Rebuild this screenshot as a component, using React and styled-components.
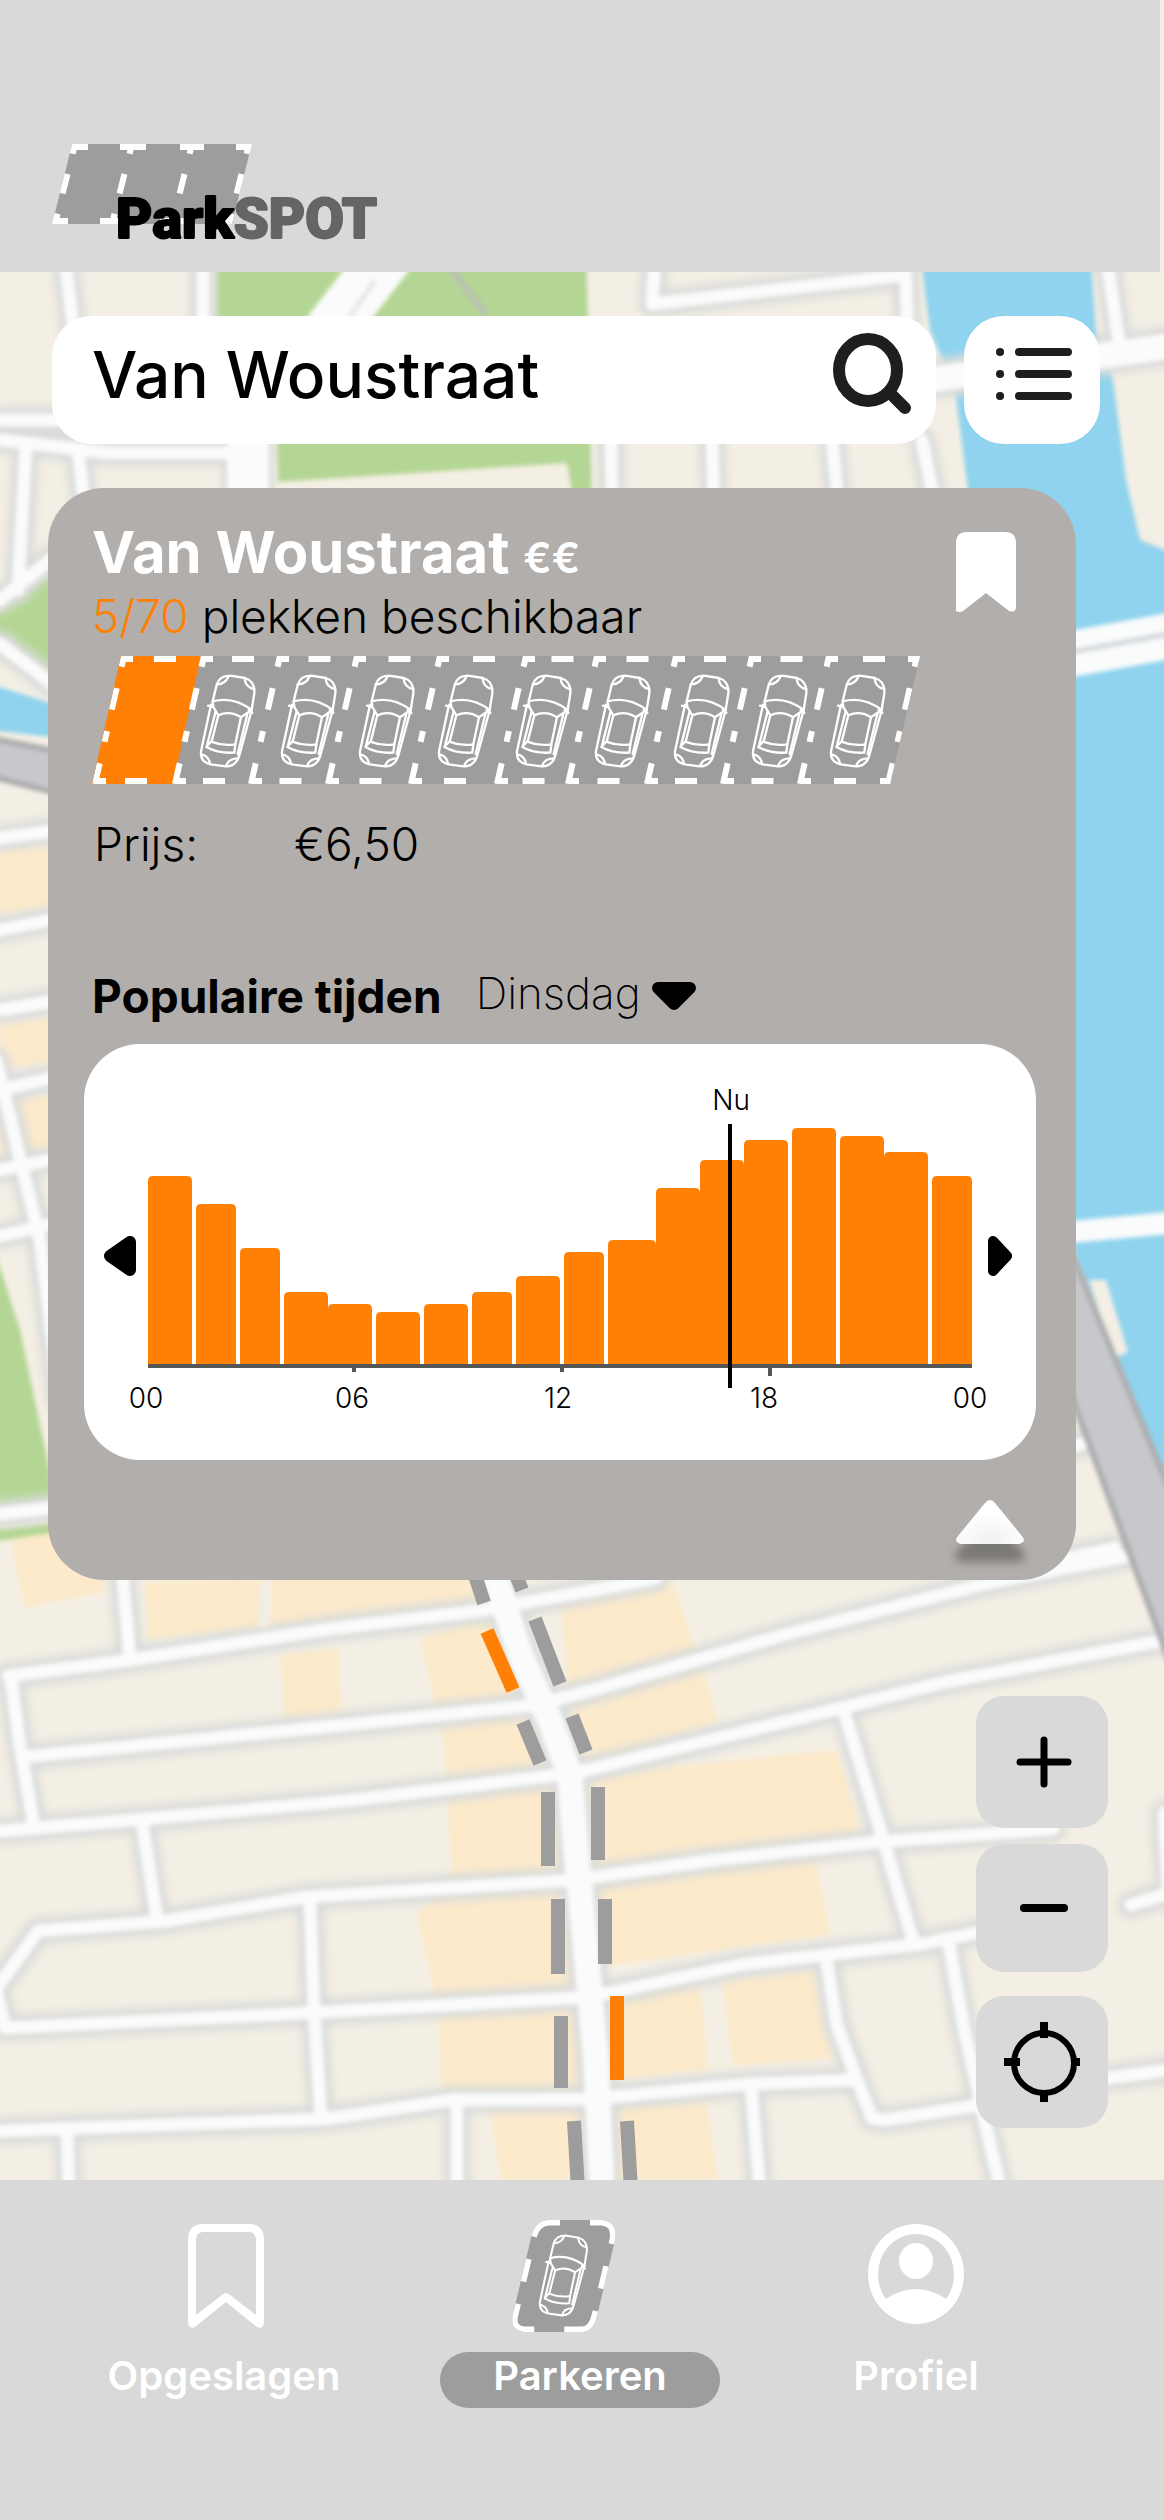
import React from 'react'
import styled, { createGlobalStyle } from 'styled-components'

const ORANGE = '#ff8005';
const GRAY = '#9d9d9d';

const GlobalStyle = createGlobalStyle`
  * {
    box-sizing: border-box;
  }
  body {
    margin: 0;
    background: #d9d9d9;
    font-family: Inter, "Liberation Sans", sans-serif;
    color: #000;
  }
  button {
    border: none;
    padding: 0;
    background: none;
    cursor: pointer;
  }
  svg {
    display: block;
  }
`;

const Page = styled.div`
  position: relative;
  display: flex;
  flex-direction: column;
  min-height: 100vh;
  overflow: hidden;
`;

/* the map lies under everything else */
const MapCanvas = styled.svg`
  position: absolute;
  top: 0;
  left: 0;
  width: 100%;
  height: 100%;
`;

const Header = styled.header`
  position: relative;
  margin-right: 4px;
  padding: 144px 52px 32px;
  background: #d9d9d9;
`;

const Main = styled.main`
  position: relative;
  flex: 1;
  display: flex;
  flex-direction: column;
  padding: 44px 0 52px;
`;

const TopBar = styled.div`
  display: flex;
  gap: 28px;
  padding: 0 64px 0 52px;
`;

const SearchForm = styled.form`
  flex: 1;
  min-width: 0;
  height: 128px;
  display: flex;
  align-items: center;
  padding: 0 24px 0 40px;
  border-radius: 40px;
  background: #fff;
`;

const SearchInput = styled.input`
  flex: 1;
  min-width: 0;
  height: 128px;
  border: none;
  outline: none;
  padding: 0 0 12px;
  background: none;
  font-family: inherit;
  font-size: 64px;
  font-weight: 500;
  color: #000;
`;

const SearchButton = styled.button`
  padding-bottom: 14px;
`;

const ListButton = styled.button`
  width: 136px;
  height: 128px;
  display: flex;
  justify-content: center;
  align-items: center;
  padding-bottom: 12px;
  border-radius: 40px;
  background: #fff;
`;

const Card = styled.section`
  display: flex;
  flex-direction: column;
  margin: 44px 88px 0 48px;
  padding: 32px 40px 36px 36px;
  border-radius: 56px;
  background: #b2aeac;
`;

const CardHead = styled.div`
  display: flex;
  justify-content: space-between;
  align-items: flex-start;
  padding: 0 20px 0 8px;
`;

const Title = styled.h1`
  margin: 0;
  font-size: 58px;
  line-height: 64px;
  font-weight: 700;
  color: #fff;
`;

const PriceLevel = styled.span`
  font-size: 42px;
  line-height: 42px;
  font-weight: 600;
`;

const Line = styled.p`
  margin: 0;
  font-size: 46px;
  line-height: 64px;
  font-weight: 300;
`;

const Free = styled.span`
  color: ${ORANGE};
`;

const SaveButton = styled.button`
  margin-top: 12px;
`;

const Spots = styled.svg`
  width: 828px;
  max-width: 100%;
  margin: 8px 0 0 8px;
`;

const PriceRow = styled.dl`
  display: flex;
  margin: 28px 0 0;
  padding-left: 10px;
  font-size: 46px;
  line-height: 64px;
  font-weight: 300;
`;

const PriceTerm = styled.dt`
  width: 200px;
`;

const PriceValue = styled.dd`
  margin: 0;
`;

const TimesHead = styled.div`
  display: flex;
  align-items: center;
  margin-top: 88px;
  padding-left: 8px;
`;

const TimesTitle = styled.h2`
  margin: 0 34px 0 0;
  font-size: 46px;
  line-height: 64px;
  font-weight: 700;
`;

const DaySelect = styled.select`
  appearance: none;
  width: 176px;
  height: 64px;
  border: none;
  outline: none;
  padding: 0 0 6px;
  background: none;
  font-family: inherit;
  font-size: 44px;
  font-weight: 200;
  color: #000;
`;

const ChartCard = styled.div`
  margin-top: 16px;
  padding: 36px 0 44px;
  border-radius: 56px;
  background: #fff;
`;

const ChartRow = styled.div`
  display: flex;
  align-items: center;
  padding: 0 24px 0 20px;
`;

const ArrowButton = styled.button`
  padding-top: 52px;
`;

const Plot = styled.svg`
  flex: 1;
  min-width: 0;
  margin: 0 16px 0 12px;
  overflow: visible;
`;

const Hours = styled.div`
  display: flex;
  justify-content: space-between;
  padding: 0 46px 0 42px;
`;

const Hour = styled.span`
  width: 40px;
  text-align: center;
  font-size: 28px;
  line-height: 36px;
  font-weight: 300;
`;

const CollapseButton = styled.button`
  align-self: flex-end;
  margin: 40px 12px 0 0;
`;

const Controls = styled.div`
  align-self: flex-end;
  display: flex;
  flex-direction: column;
  margin: 116px 56px 0 0;
`;

const ControlButton = styled.button`
  width: 132px;
  height: ${props => props.$height}px;
  margin-bottom: ${props => props.$gap}px;
  display: flex;
  justify-content: center;
  align-items: center;
  padding-left: 4px;
  border-radius: 28px;
  background: #d9d9d9;
`;

const Nav = styled.nav`
  position: relative;
  display: grid;
  grid-template-columns: 356fr 356fr 316fr;
  padding: 40px 90px 112px 46px;
  background: #d9d9d9;
`;

const NavLink = styled.a`
  display: flex;
  flex-direction: column;
  align-items: center;
  color: #fff;
  text-decoration: none;
`;

const NavIcon = styled.span`
  height: 112px;
  display: flex;
  align-items: center;
`;

const NavLabel = styled.span`
  width: 280px;
  margin-top: 20px;
  padding-bottom: 8px;
  border-radius: 28px;
  background: ${props => props.$active ? GRAY : 'transparent'};
  font-size: 40px;
  line-height: 48px;
  font-weight: 600;
  text-align: center;
`;

const streets = [
  // north
  'M65 260L75 340', 'M203 260V340', 'M655 260L652 304L905 275', 'M905 260L908 340',
  'M0 420H70', 'M0 440L110 453H250', 'M26 445L18 590', 'M78 450L84 500',
  'M611 440L612 500', 'M712 440L714 500', 'M832 440L838 500', 'M922 440L934 500',
  'M1107 260L1120 350', 'M0 600L60 552', 'M0 644L60 690',
  // west
  'M0 838L60 830', 'M0 930L60 918', 'M0 1010L60 1000', 'M0 1090L60 1076', 'M0 1170L60 1158',
  'M0 1236L60 1222', 'M-4 1060L40 1240L60 1400', 'M0 1514L70 1506',
  // east
  'M1060 1450L1110 1436', 'M1060 1560L1115 1548',
  // centre
  'M122 1570L130 1658', 'M11 1678L19 1740L33 1821', 'M142 1821L147 1854L157 1919',
  'M310 1903L314 2009L321 2119', 'M67 2131L69 2190', 'M457 2099V2190',
  'M8 1676L130 1660L329 1629L478 1611L600 1589L656 1578',
  'M23 1757L325 1727L536 1705L600 1688L791 1633L984 1584L1128 1556',
  'M0 1831L145 1819L344 1801L566 1774L579 1772L837 1709L945 1682L1160 1641',
  'M-4 1989L38 1931L165 1921L306 1897L574 1880L714 1860L876 1842L1053 1829',
  'M-4 1989L5 2028L306 2013L589 1997L745 1964L922 1944L1000 1928',
  'M0 2131L325 2119L452 2100L589 2099L749 2084L857 2080',
  'M827 1964L837 2025L857 2080L872 2118L885 2120L980 2105',
  'M845 1715L884 1842L914 1944', 'M949 1944L964 2029L991 2148L1001 2190',
  'M751 2087L760 2190', 'M1164 1813L1168 1885', 'M1131 1905L1170 1893', 'M1100 2079L1170 2070',
];

const mainRoads = [
  'M490 1560L520 1654L551 1723L570 1776L575 1840L583 1920L596 2060L602 2190',
  'M928 380L1170 346',
];

const buildings = [
  '8,1530 110,1530 104,1592 25,1608',
  '145,1582 470,1570 485,1605 148,1640',
  '281,1654 339,1648 341,1713 285,1721',
  '420,1640 490,1612 551,1723 570,1776 590,2180 501,2180 490,2110 442,2088 438,2010 417,1915 452,1870 443,1735',
  '560,1590 672,1580 691,1637 706,1678 718,1723 575,1770',
  '590,1780 656,1768 837,1750 860,1830 816,1862 830,1935 591,1968',
  '610,1990 700,1984 708,2070 610,2080',
  '722,1980 814,1970 833,2058 733,2066',
  '610,2107 706,2101 718,2180 610,2180',
  '0,850 60,844 60,905 0,915',
  '0,1024 60,1015 60,1060 0,1070',
  '0,1104 60,1092 60,1146 0,1158',
];

const parkedBars = [
  [474, 1572, 484, 1603], [487, 1631, 513, 1690, true], [523, 1722, 540, 1763],
  [548, 1792, 548, 1866], [558, 1899, 558, 1974], [561, 2016, 561, 2088], [574, 2121, 578, 2190],
  [514, 1570, 522, 1590], [535, 1619, 560, 1684], [572, 1716, 586, 1752],
  [598, 1787, 598, 1860], [605, 1899, 605, 1964], [617, 1996, 617, 2080, true], [627, 2121, 631, 2190],
];

const CityMap = () => (
  <MapCanvas viewBox="0 0 1164 2520" preserveAspectRatio="xMidYMin slice" aria-hidden="true">
    <defs>
      <filter id="soft" x="-5%" y="-5%" width="110%" height="110%">
        <feGaussianBlur stdDeviation="4" />
      </filter>
      <filter id="edge" x="-5%" y="-5%" width="110%" height="110%">
        <feGaussianBlur stdDeviation="2" />
      </filter>
    </defs>
    <rect width="1164" height="2520" fill="#f4efe4" />
    <g filter="url(#edge)">
      <g fill="#fceacb">
        {buildings.map(points => <polygon key={points} points={points} />)}
      </g>
      <g fill="#b4d694">
        <polygon points="215,240 586,240 592,500 573,500 567,463 278,482 276,440 215,320" />
        <polygon points="-10,616 60,566 60,680 -10,640" />
        <polygon points="-10,1236 20,1330 56,1500 -10,1512" />
        <polygon points="-10,1530 60,1522 60,1532 -10,1542" />
      </g>
      <g fill="#8fd3ee">
        <polygon points="918,240 1090,240 1096,330 1113,380 1126,480 1140,540 1180,556 1180,1520 1076,1260 980,600 968,490 955,390 930,330" />
        <polygon points="-10,684 60,706 60,738 -10,730" />
      </g>
    </g>
    <g fill="none" strokeLinecap="round" strokeLinejoin="round">
      <g filter="url(#soft)" stroke="#dadcda" strokeWidth="27">
        {streets.map(d => <path key={d} d={d} />)}
        {mainRoads.map(d => <path key={d} d={d} strokeWidth="40" />)}
        <path d="M248 440V500" strokeWidth="52" />
      </g>
      <g filter="url(#edge)" stroke="#fafbfb" strokeWidth="13">
        {streets.map(d => <path key={d} d={d} />)}
        {mainRoads.map(d => <path key={d} d={d} strokeWidth="26" />)}
        <path d="M248 440V500" strokeWidth="42" />
        <path d="M392 250L330 330" strokeWidth="52" />
        <path d="M266 1584L264 1622" stroke="#f3eee4" strokeWidth="12" />
        <path d="M1060 656L1180 634" strokeWidth="46" />
        <path d="M1060 1233L1180 1222" strokeWidth="22" />
      </g>
      <g filter="url(#edge)" stroke="#d3d8dc" strokeWidth="5">
        <path d="M374 282L350 316" stroke="#e6e8e8" />
        <path d="M446 262L484 312" stroke="#b9c4ae" strokeWidth="8" />
        <path d="M1060 654L1180 632" />
      </g>
    </g>
    <g filter="url(#edge)">
      <polygon points="1089,1280 1106,1280 1128,1352 1114,1358" fill="#f4efe4" />
      <polygon points="1060,1225 1180,1515 1180,1690 1060,1365" fill="#c7c8cc" stroke="#acacae" strokeWidth="6" />
      <polygon points="-10,738 60,752 60,794 -10,776" fill="#c7c8cc" stroke="#acacae" strokeWidth="6" />
    </g>
    <g strokeWidth="14">
      {parkedBars.map(([x1, y1, x2, y2, free]) => (
        <line key={`${x1}-${y1}`} x1={x1} y1={y1} x2={x2} y2={y2} stroke={free ? ORANGE : GRAY} />
      ))}
    </g>
  </MapCanvas>
)

const Logo = () => (
  <svg width="348" height="96" viewBox="52 144 348 96" role="img" aria-label="ParkSPOT" overflow="visible">
    <clipPath id="logoLot"><polygon points="72,144 252,144 232,224 52,224" /></clipPath>
    <g clipPath="url(#logoLot)">
      <polygon points="72,144 252,144 232,224 52,224" fill={GRAY} />
      <g fill="none" stroke="#fff" strokeWidth="6">
        <path d="M75 144L55 224M132 144L112 224M192 144L172 224M249 144L229 224" strokeDasharray="10 21 20 21" />
        <path d="M72 147H88M120 147H146M180 147H204M236 147H252M52 221H68M100 221H126M160 221H184M216 221H232" />
      </g>
    </g>
    <text
      x="116" y="238" fontFamily='Roboto, "Liberation Sans", sans-serif'
      fontSize="56" fontWeight="900" stroke="#000" strokeWidth="2" strokeLinejoin="bevel"
    >
      Park<tspan fill="#666464" stroke="#666464">SPOT</tspan>
    </text>
  </svg>
)

// top view of a car, 56 x 92
const CarShape = () => (
  <g transform="scale(0.3333) translate(-420 -585)" fill="none" stroke="#fff" strokeWidth="7" strokeLinejoin="round" strokeLinecap="round">
    <path d="M458 664L470 615Q478 587 510 587L555 594Q586 604 583 640L575 690L538 826Q528 860 497 859L452 853Q420 846 423 814L453 674" />
    <path d="M458 664Q520 648 575 690M444 677L460 681L458 664M577 699L566 690" />
    <path d="M460 681L475 706Q510 690 543 712L575 690" />
    <path d="M475 706L455 785M543 712L526 793M467 694L441 797M562 702L533 822" />
    <path d="M453 785Q490 799 526 793L523 818Q475 821 439 801Z" />
    <path d="M470 613Q495 614 506 589M554 596Q556 622 583 627M424 823Q446 828 450 851M535 835Q505 835 499 857" />
  </g>
)

const dividers = [124, 204, 280, 357, 440, 526, 597, 676, 752, 829, 917];
const carSpots = [200, 281, 359, 438, 516, 595, 674, 752, 830];

const SpotStrip = () => (
  <Spots viewBox="92 656 828 128" role="img" aria-label="5 van 70 plekken vrij">
    <clipPath id="lot"><polygon points="121,656 920,656 890,784 92,784" /></clipPath>
    <g clipPath="url(#lot)">
      <rect x="92" y="656" width="828" height="128" fill={GRAY} />
      <polygon points="118,656 201,656 173,784 88,784" fill={ORANGE} />
      <g fill="none" stroke="#fff" strokeWidth="6">
        {dividers.map((x, i) => {
          const next = dividers[i + 1];
          const mid = (x + next) / 2 + 2;
          return (
            <g key={x}>
              <path d={`M${x} 656L${x - 29} 784`} strokeDasharray="11 22 22 22" />
              {next && <path d={`M${x - 2} 659h11M${mid - 12} 659h22M${x - 29} 781h11M${mid - 41} 781h22`} />}
            </g>
          );
        })}
        <path d="M908 659h12M880 781h12" />
      </g>
    </g>
    {carSpots.map(x => (
      <g key={x} transform={`translate(${x} 675)`}><CarShape /></g>
    ))}
  </Spots>
)

// left edge, width and top of each bar
const bars = [
  [148, 44, 1176], [196, 40, 1204], [240, 40, 1248], [284, 44, 1292], [328, 44, 1304], [376, 44, 1312],
  [424, 44, 1304], [472, 40, 1292], [516, 44, 1276], [564, 40, 1252], [608, 48, 1240], [656, 44, 1188],
  [700, 44, 1160], [744, 44, 1140], [792, 44, 1128], [840, 44, 1136], [884, 44, 1152], [932, 40, 1176],
];

const BusyChart = () => (
  <Plot viewBox="148 1080 824 300" role="img" aria-label="Drukte per uur">
    <g fill={ORANGE}>
      {bars.map(([x, w, y]) => (
        <path key={x} d={`M${x} 1364V${y + 5}q0 -5 5 -5h${w - 10}q5 0 5 5V1364z`} />
      ))}
    </g>
    <g fill="#555">
      <rect x="148" y="1364" width="824" height="4" />
      <rect x="352" y="1368" width="4" height="4" />
      <rect x="560" y="1368" width="4" height="4" />
      <rect x="768" y="1368" width="4" height="8" />
    </g>
    <rect x="728" y="1124" width="4" height="264" />
    <text x="731" y="1110" textAnchor="middle" fontSize="28" fontWeight="300">Nu</text>
  </Plot>
)

const App = () => {
  return (
    <Page>
      <GlobalStyle />
      <CityMap />
      <Header>
        <Logo />
      </Header>
      <Main>
        <TopBar>
          <SearchForm role="search" onSubmit={e => e.preventDefault()}>
            <SearchInput type="text" aria-label="Zoek een straat" defaultValue="Van Woustraat" />
            <SearchButton type="submit" aria-label="Zoeken">
              <svg width="80" height="84" viewBox="832 331 80 84" fill="none" stroke="#1e1e1e" strokeWidth="12">
                <ellipse cx="868" cy="370" rx="29" ry="31" />
                <path d="M890 393L905 408" strokeLinecap="round" />
              </svg>
            </SearchButton>
          </SearchForm>
          <ListButton type="button" aria-label="Lijst">
            <svg width="80" height="52" viewBox="992 348 80 52" stroke="#1e1e1e" strokeWidth="8" strokeLinecap="round">
              <path d="M1000 352h.1M1000 374h.1M1000 396h.1M1019 352h49M1019 374h49M1019 396h49" />
            </svg>
          </ListButton>
        </TopBar>

        <Card>
          <CardHead>
            <div>
              <Title>Van Woustraat <PriceLevel>€€</PriceLevel></Title>
              <Line><Free>5/70</Free> plekken beschikbaar</Line>
            </div>
            <SaveButton type="button" aria-label="Opslaan">
              <svg width="60" height="80" viewBox="0 0 60 80" fill="#fff">
                <path d="M0 11Q0 0 11 0H49Q60 0 60 11V76Q59 81 53 79L30 61L7 79Q3 81 0 79Z" />
              </svg>
            </SaveButton>
          </CardHead>
          <SpotStrip />
          <PriceRow>
            <PriceTerm>Prijs:</PriceTerm>
            <PriceValue>€6,50</PriceValue>
          </PriceRow>
          <TimesHead>
            <TimesTitle>Populaire tijden</TimesTitle>
            <DaySelect aria-label="Dag" defaultValue="Dinsdag">
              <option>Maandag</option>
              <option>Dinsdag</option>
              <option>Woensdag</option>
            </DaySelect>
            <svg width="44" height="28" viewBox="0 0 44 28" stroke="#000" strokeWidth="12" strokeLinejoin="round" aria-hidden="true">
              <path d="M6 6H38L22 22Z" />
            </svg>
          </TimesHead>
          <ChartCard>
            <ChartRow>
              <ArrowButton type="button" aria-label="Vorige dag">
                <svg width="32" height="40" viewBox="0 0 32 40" stroke="#000" strokeWidth="12" strokeLinejoin="round">
                  <path d="M26 6V34L6 20Z" />
                </svg>
              </ArrowButton>
              <BusyChart />
              <ArrowButton type="button" aria-label="Volgende dag">
                <svg width="24" height="40" viewBox="0 0 24 40" stroke="#000" strokeWidth="10" strokeLinejoin="round">
                  <path d="M5 5V35L19 20Z" />
                </svg>
              </ArrowButton>
            </ChartRow>
            <Hours>
              <Hour>00</Hour>
              <Hour>06</Hour>
              <Hour>12</Hour>
              <Hour>18</Hour>
              <Hour>00</Hour>
            </Hours>
          </ChartCard>
          <CollapseButton type="button" aria-label="Inklappen">
            <svg width="68" height="44" viewBox="0 0 68 44" overflow="visible">
              <defs>
                <filter id="drop" x="-40%" y="-40%" width="180%" height="220%">
                  <feGaussianBlur stdDeviation="5" />
                </filter>
                <radialGradient id="shine" cx="0.5" cy="0.9" r="0.6">
                  <stop offset="0" stopColor="#f1f1f1" />
                  <stop offset="1" stopColor="#fff" />
                </radialGradient>
              </defs>
              <path d="M5 56H63L34 24Z" fill="#7a7876" stroke="#7a7876" strokeWidth="12" strokeLinejoin="round" filter="url(#drop)" />
              <path d="M29 3Q34 -3 39 3L66 36Q71 42 63 44H5Q-3 42 2 36Z" fill="url(#shine)" />
            </svg>
          </CollapseButton>
        </Card>

        <Controls>
          <ControlButton type="button" aria-label="Inzoomen" $height={132} $gap={16}>
            <svg width="56" height="52" viewBox="0 0 56 52" stroke="#000" strokeWidth="7" strokeLinecap="round">
              <path d="M4 26H52M28 4V48" />
            </svg>
          </ControlButton>
          <ControlButton type="button" aria-label="Uitzoomen" $height={128} $gap={24}>
            <svg width="48" height="8" viewBox="0 0 48 8" stroke="#000" strokeWidth="8" strokeLinecap="round">
              <path d="M4 4H44" />
            </svg>
          </ControlButton>
          <ControlButton type="button" aria-label="Mijn locatie" $height={132} $gap={0}>
            <svg width="80" height="80" viewBox="1004 2020 80 80" fill="none" stroke="#000">
              <circle cx="1044" cy="2061" r="30" strokeWidth="6" />
              <path d="M1044 2020v16M1044 2088v12M1004 2060h16M1071 2060h9" strokeWidth="8" />
            </svg>
          </ControlButton>
        </Controls>
      </Main>

      <Nav>
        <NavLink href="#opgeslagen">
          <NavIcon>
            <svg width="80" height="104" viewBox="-4 0 80 104" fill="#fff">
              <path fillRule="evenodd" d="M0 14Q1 1 13 0H63Q75 1 76 14V98Q75 106 69 103L38 78L7 103Q1 106 0 98ZM8 91L34 71Q38 67 42 71L68 91V15Q67 8 61 8H15Q9 8 8 15Z" />
            </svg>
          </NavIcon>
          <NavLabel>Opgeslagen</NavLabel>
        </NavLink>
        <NavLink href="#parkeren" aria-current="page">
          <NavIcon>
            <svg width="136" height="112" viewBox="0 0 136 112">
              <clipPath id="navSpot">
                <path d="M36 0H90Q106 2 103 20L85 96Q81 112 70 112H12Q-3 110 1 94L20 14Q24 1 36 0Z" />
              </clipPath>
              <g clipPath="url(#navSpot)">
                <rect width="104" height="112" fill={GRAY} />
                <path
                  d="M36 0H90Q106 2 103 20L85 96Q81 112 70 112H12Q-3 110 1 94L20 14Q24 1 36 0Z"
                  fill="none" stroke="#fff" strokeWidth="11"
                  strokeDasharray="12 30 44 23 23 23 46 30 46 23 23 23 60"
                />
              </g>
              <g transform="translate(27 15) scale(0.88)"><CarShape /></g>
            </svg>
          </NavIcon>
          <NavLabel $active>Parkeren</NavLabel>
        </NavLink>
        <NavLink href="#profiel">
          <NavIcon>
            <svg width="96" height="104" viewBox="0 0 96 104" fill="#fff">
              <path fillRule="evenodd" d="M48 0A48 50 0 1 1 48 100A48 50 0 1 1 48 0ZM18 75Q32 65 48 65T78 75Q86 65 86 50A38 40 0 1 0 10 50Q10 65 18 75Z" />
              <ellipse cx="48" cy="37" rx="17" ry="18" />
            </svg>
          </NavIcon>
          <NavLabel>Profiel</NavLabel>
        </NavLink>
      </Nav>
    </Page>
  );
}

export default App
